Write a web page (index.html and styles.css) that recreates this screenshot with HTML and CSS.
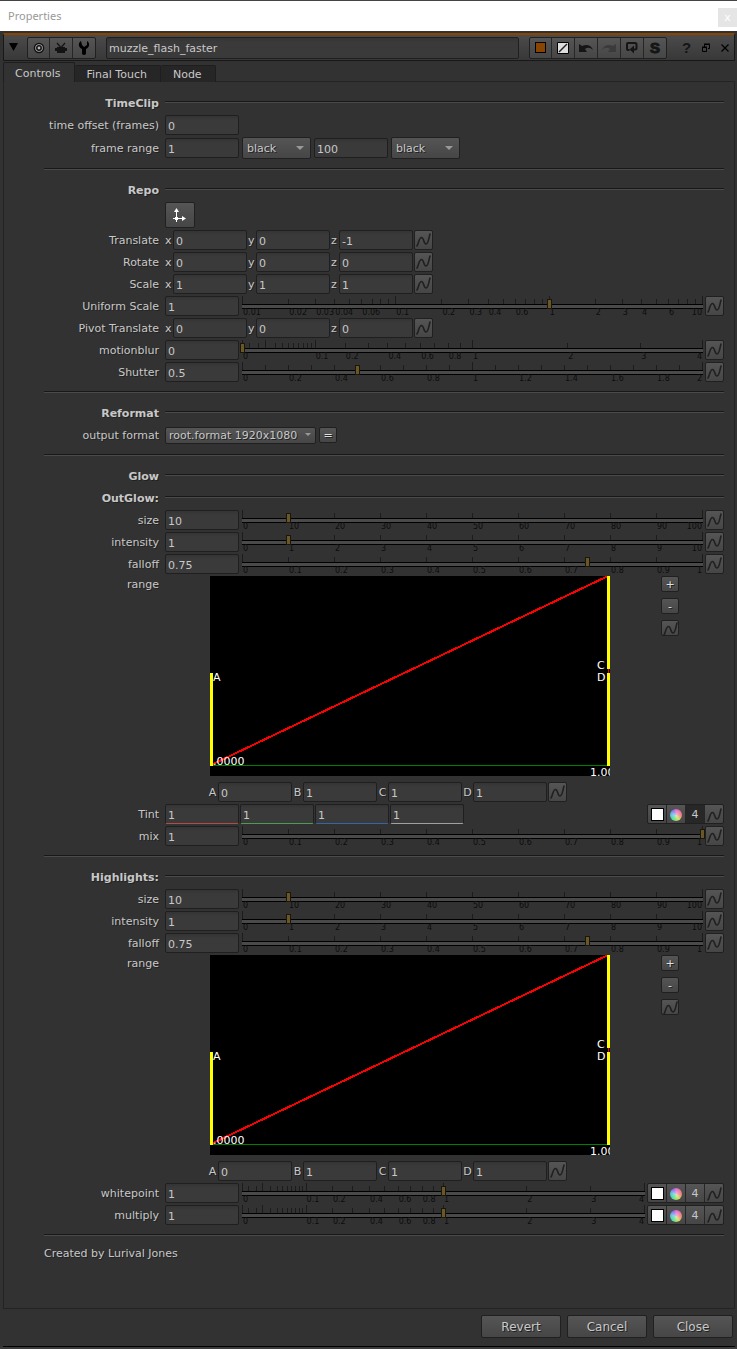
FILE: index.html
```html
<!DOCTYPE html>
<html lang="en">
<head>
<meta charset="utf-8">
<title>Properties</title>
<link rel="stylesheet" href="styles.css">
</head>
<body>
<svg class="defs" aria-hidden="true">
  <symbol id="curve" viewBox="0 0 19 20"><path d="M3 16C4.500 14 5 7.500 7.500 7.500S9.500 14 12 14S15 7 16 4" fill="none" stroke="#202020" stroke-width="1.600" stroke-linecap="round"/></symbol>
</svg>

<header class="titlebar"><h1>Properties</h1><button class="window-close" aria-label="Close window">x</button></header>

<div class="window">
  <div class="nodebar">
    <button class="plain" aria-label="Collapse"><svg width="20" height="20"><path d="M5 5h9L9.500 13z" fill="#000"/></svg></button>
    <div class="group tools">
      <button aria-label="Center node"><svg width="20" height="20"><circle cx="10" cy="10" r="4.500" fill="#b5b5b5" stroke="#111" stroke-width="1.500"/><circle cx="10" cy="10" r="2.200" fill="#b5b5b5" stroke="#111" stroke-width="1.500"/></svg></button>
      <button aria-label="Hide input"><svg width="20" height="20"><path d="M4 10h2V9h8v1h2v3h-2v2H6v-2H4z" fill="#131313"/><path d="M9.500 9L6 5M10.500 9L14 5" stroke="#131313" stroke-width="1.200"/></svg></button>
      <button aria-label="Edit node"><svg width="20" height="20"><path d="M7 3C4 5 4 9 8 11V16Q10 18 12 16V11C16 9 16 5 13 3V7L10 9L8 7Z" fill="#000"/></svg></button>
    </div>
    <input class="field name" aria-label="Node name" value="muzzle_flash_faster">
    <div class="group tools">
      <button aria-label="Node color"><i class="swatch orange"></i></button>
      <button aria-label="Interface color"><svg width="12" height="12"><path d="M.5.5h11v11H.5z" fill="#ddd" stroke="#000"/><path d="M2 10L10 2" stroke="#222" stroke-width="1.500"/></svg></button>
      <button aria-label="Undo"><svg width="16" height="14"><path d="M1 3V11H9L7 8Q11 5 15 9Q12 2 4 5Z" fill="#151515"/></svg></button>
      <button aria-label="Redo"><svg width="16" height="14"><path d="M15 3V11H7L9 8Q5 5 1 9Q4 2 12 5Z" fill="#3b3b3b"/></svg></button>
      <button aria-label="Revert knobs"><svg width="16" height="16"><path d="M5.500 10H4Q3 10 3 9V4Q3 3 4 3H11Q12.500 3 12.500 4.500V8Q12.500 9.500 11 9.500H9" fill="none" stroke="#151515" stroke-width="2"/><path d="M10 5.500v8L5.500 9.500z" fill="#151515"/></svg></button>
      <button class="strong" aria-label="Script">S</button>
    </div>
    <div class="window-tools">
      <button class="plain strong" aria-label="Help">?</button>
      <button class="plain" aria-label="Float"><svg width="10" height="10"><path d="M3.500 4V1.500h5v4H7M1.500 4.500h4v4h-4z" fill="none" stroke="#000"/><path d="M3 1h6M1 4h5" stroke="#000"/></svg></button>
      <button class="plain" aria-label="Close panel"><svg width="10" height="10"><path d="M1.500 1.500l7 7M8.500 1.500l-7 7" stroke="#000" stroke-width="1.300"/></svg></button>
    </div>
  </div>

  <div class="tabs" role="tablist">
    <button class="tab active" role="tab" aria-selected="true">Controls</button>
    <button class="tab" role="tab">Final Touch</button>
    <button class="tab" role="tab">Node</button>
  </div>

  <main class="panel">
    <section class="first">
      <div class="row head"><h2>TimeClip</h2><hr></div>
      <div class="row"><label for="off">time offset (frames)</label><div class="cells"><input class="field" id="off" value="0"></div></div>
      <div class="row spaced"><label for="first">frame range</label><div class="cells"><input class="field" id="first" value="1"><span class="select"><select aria-label="before"><option>black</option></select></span><input class="field" aria-label="last frame" value="100"><span class="select"><select aria-label="after"><option>black</option></select></span></div></div>
    </section>
    <hr class="divider">
    <section>
      <div class="row head"><h2>Repo</h2><hr></div>
      <div class="row tall"><span></span><div class="cells"><button class="btn axis" aria-label="Axis menu"><svg width="16" height="16"><path d="M4.500 15V4M1 11.500H12" stroke="#fff" fill="none"/><path d="M4.500 1L7 5H2zM10 9l4 2.500L10 14zM3 10h3v3H3z" fill="#fff"/></svg></button></div></div>
      <div class="row"><span class="label">Translate</span><div class="cells xyz"><label for="tx">x</label><input class="field" id="tx" value="0"><label for="ty">y</label><input class="field" id="ty" value="0"><label for="tz">z</label><input class="field" id="tz" value="-1"><button class="btn curve" aria-label="Animation"><svg><use href="#curve"/></svg></button></div></div>
      <div class="row"><span class="label">Rotate</span><div class="cells xyz"><label for="rx">x</label><input class="field" id="rx" value="0"><label for="ry">y</label><input class="field" id="ry" value="0"><label for="rz">z</label><input class="field" id="rz" value="0"><button class="btn curve" aria-label="Animation"><svg><use href="#curve"/></svg></button></div></div>
      <div class="row"><span class="label">Scale</span><div class="cells xyz"><label for="sx">x</label><input class="field" id="sx" value="1"><label for="sy">y</label><input class="field" id="sy" value="1"><label for="sz">z</label><input class="field" id="sz" value="1"><button class="btn curve" aria-label="Animation"><svg><use href="#curve"/></svg></button></div></div>
      <div class="row"><label for="us">Uniform Scale</label><div class="cells"><input class="field" id="us" value="1"><div class="slider" data-scale="log" data-value="1"></div><button class="btn curve" aria-label="Animation"><svg><use href="#curve"/></svg></button></div></div>
      <div class="row"><span class="label">Pivot Translate</span><div class="cells xyz"><label for="px">x</label><input class="field" id="px" value="0"><label for="py">y</label><input class="field" id="py" value="0"><label for="pz">z</label><input class="field" id="pz" value="0"><button class="btn curve" aria-label="Animation"><svg><use href="#curve"/></svg></button></div></div>
      <div class="row"><label for="mb">motionblur</label><div class="cells"><input class="field" id="mb" value="0"><div class="slider" data-scale="root" data-value="0"></div><button class="btn curve" aria-label="Animation"><svg><use href="#curve"/></svg></button></div></div>
      <div class="row"><label for="sh">Shutter</label><div class="cells"><input class="field" id="sh" value="0.5"><div class="slider" data-scale="two" data-value="0.5"></div><button class="btn curve" aria-label="Animation"><svg><use href="#curve"/></svg></button></div></div>
    </section>
    <hr class="divider">
    <section>
      <div class="row head"><h2>Reformat</h2><hr></div>
      <div class="row"><label for="fmt">output format</label><div class="cells"><span class="select format"><select id="fmt"><option>root.format 1920x1080</option></select></span><button class="btn small">=</button></div></div>
    </section>
    <hr class="divider">
    <section>
      <div class="row head"><h2>Glow</h2><hr></div>
      <div class="row head"><h2>OutGlow:</h2><hr></div>
      <div class="row"><label for="gs">size</label><div class="cells"><input class="field" id="gs" value="10"><div class="slider" data-scale="hundred" data-value="10"></div><button class="btn curve" aria-label="Animation"><svg><use href="#curve"/></svg></button></div></div>
      <div class="row"><label for="gi">intensity</label><div class="cells"><input class="field" id="gi" value="1"><div class="slider" data-scale="ten" data-value="1"></div><button class="btn curve" aria-label="Animation"><svg><use href="#curve"/></svg></button></div></div>
      <div class="row"><label for="gf">falloff</label><div class="cells"><input class="field" id="gf" value="0.75"><div class="slider" data-scale="one" data-value="0.75"></div><button class="btn curve" aria-label="Animation"><svg><use href="#curve"/></svg></button></div></div>
      <div class="row range"><span class="label">range</span><div class="plot">
        <svg class="graph" viewBox="0 0 400 200">
          <path d="M0 189.500H398" stroke="#008000"/>
          <path d="M3 188L398 0V100" fill="none" stroke="#f00" stroke-width="2" shape-rendering="crispEdges"/>
          <path d="M0 97h3v93H0zM397 0h3v93h-3zM397 97h3v93h-3z" fill="#ff0"/>
          <path d="M397 93h3v4h-3z" fill="#000"/><path d="M398 93h1v4h-1z" fill="#f00"/>
          <g fill="#fff" font-size="11"><text x="3" y="105">A</text><text x="387" y="93">C</text><text x="387" y="105">D</text><text x="3" y="189">.0000</text><text x="380" y="200">1.00</text></g>
        </svg>
        <div class="plot-tools"><button class="btn small">+</button><button class="btn small">-</button><button class="btn small" aria-label="Animation"><svg><use href="#curve"/></svg></button></div></div></div>
      <div class="row"><span></span><div class="cells abcd"><label for="ga">A</label><input class="field" id="ga" value="0"><label for="gb">B</label><input class="field" id="gb" value="1"><label for="gc">C</label><input class="field" id="gc" value="1"><label for="gd">D</label><input class="field" id="gd" value="1"><button class="btn curve" aria-label="Animation"><svg><use href="#curve"/></svg></button></div></div>
      <div class="row"><label for="tr">Tint</label><div class="cells rgba"><input class="field red" id="tr" value="1"><input class="field green" aria-label="green" value="1"><input class="field blue" aria-label="blue" value="1"><input class="field alpha" aria-label="alpha" value="1"><div class="group color"><button aria-label="Swatch"><i class="swatch"></i></button><button aria-label="Color wheel"><i class="wheel"></i></button><button class="pressed">4</button><button aria-label="Animation"><svg><use href="#curve"/></svg></button></div></div></div>
      <div class="row"><label for="mix">mix</label><div class="cells"><input class="field" id="mix" value="1"><div class="slider" data-scale="one" data-value="1"></div><button class="btn curve" aria-label="Animation"><svg><use href="#curve"/></svg></button></div></div>
    </section>
    <hr class="divider">
    <section>
      <div class="row head"><h2>Highlights:</h2><hr></div>
      <div class="row"><label for="hs">size</label><div class="cells"><input class="field" id="hs" value="10"><div class="slider" data-scale="hundred" data-value="10"></div><button class="btn curve" aria-label="Animation"><svg><use href="#curve"/></svg></button></div></div>
      <div class="row"><label for="hi">intensity</label><div class="cells"><input class="field" id="hi" value="1"><div class="slider" data-scale="ten" data-value="1"></div><button class="btn curve" aria-label="Animation"><svg><use href="#curve"/></svg></button></div></div>
      <div class="row"><label for="hf">falloff</label><div class="cells"><input class="field" id="hf" value="0.75"><div class="slider" data-scale="one" data-value="0.75"></div><button class="btn curve" aria-label="Animation"><svg><use href="#curve"/></svg></button></div></div>
      <div class="row range"><span class="label">range</span><div class="plot">
        <svg class="graph" viewBox="0 0 400 200">
          <path d="M0 189.500H398" stroke="#008000"/>
          <path d="M3 188L398 0V100" fill="none" stroke="#f00" stroke-width="2" shape-rendering="crispEdges"/>
          <path d="M0 97h3v93H0zM397 0h3v93h-3zM397 97h3v93h-3z" fill="#ff0"/>
          <path d="M397 93h3v4h-3z" fill="#000"/><path d="M398 93h1v4h-1z" fill="#f00"/>
          <g fill="#fff" font-size="11"><text x="3" y="105">A</text><text x="387" y="93">C</text><text x="387" y="105">D</text><text x="3" y="189">.0000</text><text x="380" y="200">1.00</text></g>
        </svg>
        <div class="plot-tools"><button class="btn small">+</button><button class="btn small">-</button><button class="btn small" aria-label="Animation"><svg><use href="#curve"/></svg></button></div></div></div>
      <div class="row"><span></span><div class="cells abcd"><label for="ha">A</label><input class="field" id="ha" value="0"><label for="hb">B</label><input class="field" id="hb" value="1"><label for="hc">C</label><input class="field" id="hc" value="1"><label for="hd">D</label><input class="field" id="hd" value="1"><button class="btn curve" aria-label="Animation"><svg><use href="#curve"/></svg></button></div></div>
      <div class="row"><label for="wp">whitepoint</label><div class="cells"><input class="field" id="wp" value="1"><div class="slider" data-scale="root" data-value="1"></div><div class="group color"><button aria-label="Swatch"><i class="swatch"></i></button><button aria-label="Color wheel"><i class="wheel"></i></button><button>4</button><button aria-label="Animation"><svg><use href="#curve"/></svg></button></div></div></div>
      <div class="row"><label for="mu">multiply</label><div class="cells"><input class="field" id="mu" value="1"><div class="slider" data-scale="root" data-value="1"></div><div class="group color"><button aria-label="Swatch"><i class="swatch"></i></button><button aria-label="Color wheel"><i class="wheel"></i></button><button>4</button><button aria-label="Animation"><svg><use href="#curve"/></svg></button></div></div></div>
    </section>
    <hr class="divider">
    <p class="credit">Created by Lurival Jones</p>
  </main>

  <footer class="actions"><button class="btn">Revert</button><button class="btn">Cancel</button><button class="btn">Close</button></footer>
</div>
<script src="script.js"></script>
</body>
</html>
```
FILE: styles.css
```css
* { box-sizing: border-box; }
body {
  margin: 0;
  min-height: 100vh;
  display: flex;
  flex-direction: column;
  background: #323232;
  color: #c8c8c8;
  font: 11px/14px "DejaVu Sans", sans-serif;
}
button, input, select { font: inherit; color: inherit; margin: 0; }
button { padding: 0; }
h1, h2, p { margin: 0; font-size: inherit; }
.defs { position: absolute; width: 0; height: 0; }

.titlebar {
  height: 31px;
  display: flex;
  align-items: center;
  justify-content: space-between;
  padding-left: 8px;
  background: #fff;
  border-top: 1px solid #444;
  color: #999;
}
.titlebar h1 { font: 12px/16px "Noto Sans", "Open Sans", sans-serif; font-size: 11px; }
.window-close { width: 19px; height: 19px; border: 0; margin-top: 3px; background: #e5e5e5; color: #fff; line-height: 14px; }

.window {
  flex: 1;
  display: flex;
  flex-direction: column;
  padding: 2px 2px 0 3px;
  border-bottom: 2px solid #3b3b3b;
}
.nodebar {
  height: 28px;
  display: flex;
  align-items: center;
  border: 1px solid #181818;
  border-top: 2px solid #884400;
  background: linear-gradient(#4b4b4b, #383838);
}
.plain { display: flex; align-items: center; justify-content: center; background: none; border: 0; color: #151515; }
.nodebar > .plain { width: 23px; padding-right: 3px; }
.group { display: flex; border: 1px solid #202020; border-radius: 2px; background: linear-gradient(#555, #464646); }
.group button { flex: 1; display: flex; align-items: center; justify-content: center; background: none; border: 0; border-left: 1px solid #262626; min-width: 0; }
.group button:first-child { border-left: 0; }
.tools { height: 22px; }
.tools button { flex: none; width: 23px; }
.tools button:first-child { width: 21px; }
.strong { font: bold 15px/16px "Liberation Sans", sans-serif; color: #151515; }
.group .strong { -webkit-text-stroke: 1px #151515; }
.name.field { flex: 1; height: 22px; margin: 0 10px; }
.window-tools { display: flex; align-items: center; margin-left: 10px; }
.window-tools .plain { width: 19px; height: 20px; }

.tabs { display: flex; align-items: flex-end; height: 20px; margin-top: 1px; }
.tab { height: 17px; padding: 2px 13px 0 12px; background: #262626; border: 1px solid #1e1e1e; border-left: 0; border-bottom: 0; border-radius: 2px 2px 0 0; }
.tab.active { height: 20px; padding: 2px 13px 0 11px; background: #323232; border-left: 1px solid #1e1e1e; }
.panel { flex: 1; border: 1px solid #232323; border-top: 0; padding: 10px 10px 0 40px; }
.tabs::after { content: ""; flex: 1; border-bottom: 1px solid #232323; }

.row { display: grid; grid-template-columns: 115px minmax(0, 1fr); column-gap: 6px; align-items: center; min-height: 22px; }
.row label, .label, .row h2 { padding-top: 2px; white-space: nowrap; text-shadow: 1px 1px #222; }
.row > label, .label, .row h2 { text-align: right; }
.row.spaced { margin-top: 1px; }
.row.tall { min-height: 28px; }
.first { padding-bottom: 1px; }
hr { border: 0; margin: 0; height: 2px; border-top: 1px solid #181818; border-bottom: 1px solid #4a4a4a; }
.head hr { margin-bottom: 2px; }
.divider { margin: 8px 0 9px; }

.cells { display: flex; align-items: center; gap: 3px; }
.cells.xyz, .cells.rgba, .cells.abcd { gap: 1px; }
.abcd { padding-left: 43px; }
.xyz label { width: 7px; }
.abcd label { width: 9px; text-align: center; }
.field {
  flex: none;
  width: 74px;
  height: 20px;
  padding: 2px 2px 0;
  border: 1px solid #1f1f1f;
  border-radius: 2px;
  background: linear-gradient(#343434, #3a3a3a 4px);
  outline: 0;
}
.red { border-bottom-color: #b44b4b; }
.green { border-bottom-color: #4b9b55; }
.blue { border-bottom-color: #3565a5; }
.alpha { border-bottom-color: #a0a0a0; }

.btn { display: flex; align-items: center; justify-content: center; border: 1px solid #202020; border-radius: 2px; background: linear-gradient(#555, #464646); text-shadow: 1px 1px #222; }
.btn svg, .color svg { flex: none; width: 19px; height: 20px; }
.curve { width: 19px; height: 20px; }
.small { width: 18px; height: 16px; padding-top: 2px; color: #e0e0e0; overflow: hidden; }
.axis { width: 30px; height: 26px; }
.axis svg { width: 16px; height: 16px; }

.select { position: relative; width: 69px; height: 22px; }
.select select { appearance: none; width: 100%; height: 100%; padding: 2px 4px 0; border: 1px solid #202020; border-radius: 2px; background: linear-gradient(#555, #464646); text-shadow: 1px 1px #222; }
.select::after { content: ""; position: absolute; right: 7px; top: 9px; border: 4px solid transparent; border-top-color: #999; border-bottom: 0; pointer-events: none; }
.select.format { width: 151px; height: 17px; }
.format select { padding: 1px 3px 0; }
.format::after { right: 5px; top: 6px; border-width: 3px; border-bottom: 0; }

.slider { flex: 1; position: relative; height: 22px; }
.tick { position: absolute; top: 4px; width: 1px; height: 5px; background: #1c1c1c; }
.tick.major { top: 1px; height: 8px; }
.mark { position: absolute; top: 13px; padding-left: 1px; font-size: 8px; line-height: 10px; color: #0c0c0c; }
.mark.last { right: 0; }
.slider input { appearance: none; position: absolute; top: 6px; left: -2px; width: calc(100% + 5px); height: 9px; background: none; outline: 0; }
.slider::before { content: ""; position: absolute; left: 0; right: -1px; top: 9px; height: 3px; background: #4a4a4a; border: solid #000; border-width: 1px 0; }
.slider input::-webkit-slider-runnable-track { height: 3px; }
.slider input::-webkit-slider-thumb { appearance: none; width: 5px; height: 10px; margin-top: -5px; background: #6a5729; border: 1px solid #1a1608; border-radius: 0; }

.range { align-items: start; padding: 1px 0 5px; }
.plot { display: flex; justify-content: space-between; padding: 0 45px; }
.graph { width: 400px; height: 200px; background: #000; }
.plot-tools { display: flex; flex-direction: column; gap: 6px; }

.color { width: 77px; height: 20px; margin-left: auto; }
.swatch { flex: none; width: 13px; height: 13px; background: #fff; border: 1px solid #000; }
.swatch.orange { width: 11px; height: 11px; background: #884400; }
.wheel { width: 12px; height: 12px; border-radius: 50%; background: radial-gradient(#fff8, #fff0 70%), conic-gradient(#d6c, #e77 90deg, #cd5 150deg, #4d9 220deg, #5bd 280deg, #86e 330deg, #d6c); }
.color button { padding-top: 1px; }
.group .pressed { background: #272727; }

.credit { padding-top: 1px; line-height: 16px; text-shadow: 1px 1px #222; }
.actions { display: flex; justify-content: flex-end; gap: 6px; padding: 6px 2px 8px; border-bottom: 1px solid #000; }
.actions .btn { width: 80px; height: 23px; padding-top: 1px; font-size: 12px; }
```
FILE: script.js
```js
// Builds the ruler, its numbers and the range input of every slider.
const steps = (n, size) => Array.from({ length: n + 1 }, (_, i) => +(i * size).toFixed(3));
const decade = base => steps(9, base).slice(1);

const scales = {
  one: { at: v => v, ticks: steps(10, 0.1), major: [0, 1] },
  two: { at: v => v / 2, ticks: steps(20, 0.1), labels: steps(10, 0.2), major: [0, 1, 2] },
  ten: { at: v => v / 10, ticks: steps(10, 1), major: [0, 10] },
  hundred: { at: v => v / 100, ticks: steps(10, 10), major: [0, 100] },
  log: {
    at: v => (Math.log10(v) + 2) / 3,
    ticks: [...decade(0.01), ...decade(0.1), ...decade(1), 10],
    labels: [0.01, 0.02, 0.03, 0.04, 0.06, 0.1, 0.2, 0.3, 0.4, 0.6, 1, 2, 3, 4, 6, 10],
    major: [0.01, 0.1, 1, 10]
  },
  root: {
    at: v => Math.sqrt(v / 4),
    ticks: [0, 0.001, 0.005, ...decade(0.01), ...decade(0.1), 1, 2, 3, 4],
    labels: [0, 0.1, 0.2, 0.4, 0.6, 0.8, 1, 2, 3, 4],
    major: [0, 0.01, 0.1, 1, 4]
  }
};

document.querySelectorAll(".slider").forEach(el => {
  const scale = scales[el.dataset.scale];
  const add = (name, v) => {
    const node = document.createElement("span");
    node.className = name;
    node.style.left = scale.at(v) * 100 + "%";
    el.append(node);
    return node;
  };
  scale.ticks.forEach(v => add(scale.major.includes(v) ? "tick major" : "tick", v));
  (scale.labels || scale.ticks).forEach(v => {
    const mark = add("mark", v);
    mark.textContent = v;
    if (scale.at(v) > 0.999) {
      mark.classList.add("last");
      mark.style.left = "";
    }
  });
  const range = document.createElement("input");
  range.type = "range";
  range.max = 1000;
  range.value = scale.at(+el.dataset.value) * 1000;
  range.setAttribute("aria-label", el.closest(".row").querySelector("label").textContent);
  el.append(range);
});
```
